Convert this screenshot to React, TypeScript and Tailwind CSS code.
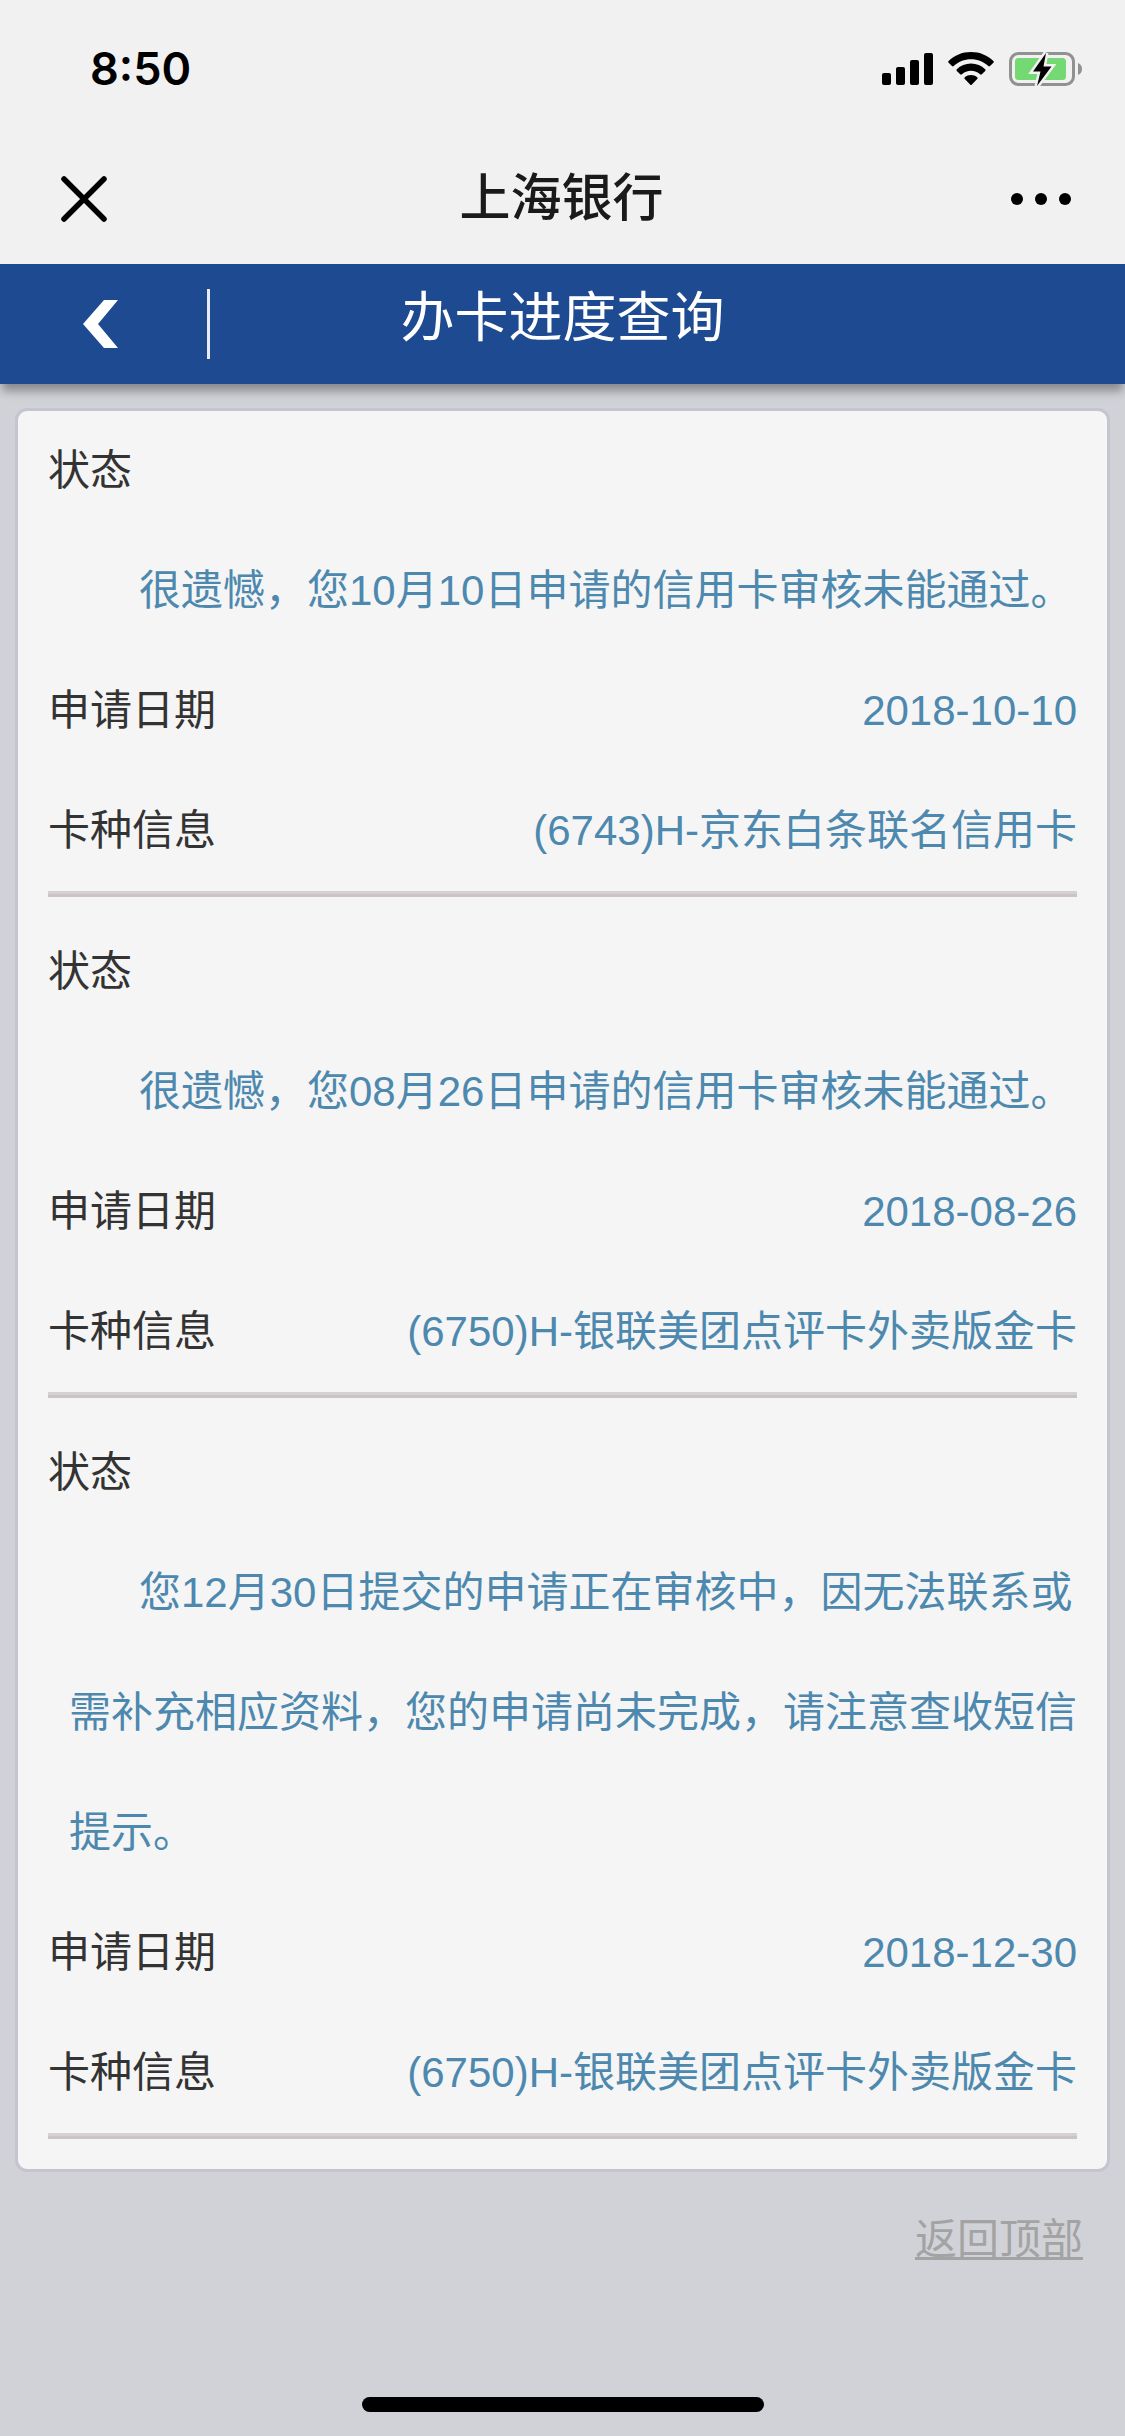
type ApplicationRecord = {
  message: string;
  date: string;
  card: string;
};

const records: ApplicationRecord[] = [
  {
    message: '很遗憾，您10月10日申请的信用卡审核未能通过。',
    date: '2018-10-10',
    card: '(6743)H-京东白条联名信用卡',
  },
  {
    message: '很遗憾，您08月26日申请的信用卡审核未能通过。',
    date: '2018-08-26',
    card: '(6750)H-银联美团点评卡外卖版金卡',
  },
  {
    message:
      '您12月30日提交的申请正在审核中，因无法联系或需补充相应资料，您的申请尚未完成，请注意查收短信提示。',
    date: '2018-12-30',
    card: '(6750)H-银联美团点评卡外卖版金卡',
  },
];

const SignalIcon = () => (
  <svg width="51" height="34" viewBox="0 0 51 34" aria-hidden="true">
    <rect x="0" y="21" width="9" height="12" rx="2" />
    <rect x="14" y="15" width="9" height="18" rx="2" />
    <rect x="28" y="8" width="9" height="25" rx="2" />
    <rect x="42" y="1" width="9" height="32" rx="2" />
  </svg>
);

const WifiIcon = () => (
  <svg width="46" height="34" viewBox="0 0 46 34" aria-hidden="true">
    <path d="M23 0C14.200 0 6.300 3.400 0.600 9a1.200 1.200 0 0 0 0 1.700L4 14.100a1.200 1.200 0 0 0 1.700 0C10.200 9.800 16.300 7.200 23 7.200s12.800 2.600 17.300 6.900a1.200 1.200 0 0 0 1.700 0l3.400-3.400a1.200 1.200 0 0 0 0-1.700C39.700 3.400 31.800 0 23 0z" />
    <path d="M23 11.500c-5.500 0-10.500 2.200-14.200 5.700a1.200 1.200 0 0 0 0 1.700l3.400 3.400a1.200 1.200 0 0 0 1.700 0c2.400-2.200 5.600-3.600 9.100-3.600s6.700 1.400 9.100 3.600a1.200 1.200 0 0 0 1.700 0l3.400-3.400a1.200 1.200 0 0 0 0-1.700C33.500 13.700 28.500 11.500 23 11.500z" />
    <path d="M23 23c-2.400 0-4.500 0.800-6.200 2.200a1.200 1.200 0 0 0 0 1.800l5.300 5.500a1.200 1.200 0 0 0 1.800 0l5.300-5.500a1.200 1.200 0 0 0 0-1.800C27.500 23.800 25.400 23 23 23z" />
  </svg>
);

const BatteryIcon = () => (
  <svg width="74" height="38" viewBox="0 -2 74 38" aria-hidden="true">
    <rect x="1.500" y="1.500" width="63" height="31" rx="8" fill="none" stroke="#919191" strokeWidth="3" />
    <path d="M69 11c2.600 1 4 3.300 4 6s-1.400 5-4 6z" fill="#919191" />
    <rect x="6" y="6" width="51" height="22" rx="3.500" fill="#75d973" />
    {/* Bolt with a halo that cuts through the shell */}
    <path
      d="M37 1L24 19.500h7.500L28 34l14.500-19.500h-8z"
      stroke="#f1f1f1"
      strokeWidth="5"
      fill="#f1f1f1"
    />
    <path d="M37 1L24 19.500h7.500L28 34l14.500-19.500h-8z" fill="#000" />
  </svg>
);

const StatusBar = () => (
  <div className="flex h-[132px] items-center justify-between pr-[42px] pl-[90px] pt-[6px]">
    <span className="font-['Inter',sans-serif] text-[45px] leading-[48px] font-semibold">8:50</span>
    <div className="flex items-center gap-[15px]">
      <SignalIcon />
      <WifiIcon />
      <BatteryIcon />
    </div>
  </div>
);

const NavBar = () => (
  <div className="grid h-[132px] grid-cols-[1fr_auto_1fr] items-center pt-[2px] pr-[54px] pl-[52px]">
    <button type="button" aria-label="关闭" className="justify-self-start p-2">
      <svg width="48" height="48" viewBox="0 0 48 48" fill="none" stroke="#000" strokeWidth="5.500" strokeLinecap="round">
        <path d="M4 4l40 40M44 4L4 44" />
      </svg>
    </button>
    <h1 className="text-[51px] leading-[72px] font-medium text-[#1a1a1a]">上海银行</h1>
    <button type="button" aria-label="更多" className="justify-self-end">
      <svg width="60" height="46" viewBox="0 0 60 46">
        <circle cx="6" cy="23" r="6" />
        <circle cx="30" cy="23" r="6" />
        <circle cx="54" cy="23" r="6" />
      </svg>
    </button>
  </div>
);

const PageHeader = () => (
  <div className="relative grid h-[120px] grid-cols-[1fr_auto_1fr] items-center bg-[#1e4a91] text-white shadow-[0_9px_9px_-2px_rgba(0,0,0,0.35)]">
    <div className="flex items-center">
      <button type="button" aria-label="返回" className="flex w-[207px] pl-[83px]">
        <svg width="36" height="50" viewBox="0 0 36 50" fill="#fff">
          <path d="M0 25L21 1h14L15 25l20 24H21z" />
        </svg>
      </button>
      <span className="h-[70px] w-[3px] bg-[#e9ebf2]" />
    </div>
    <h2 className="pb-[12px] text-[54px] leading-[78px]">办卡进度查询</h2>
  </div>
);

const Row = ({ label, value }: { label: string; value: string }) => (
  <div className="flex justify-between">
    <dt>{label}</dt>
    <dd className="text-[#4d88ae]">{value}</dd>
  </div>
);

const Record = ({ message, date, card }: ApplicationRecord) => (
  <dl className="mb-[15px] border-b-[3px] border-[#cdc3c4]">
    <div>
      <dt>状态</dt>
      <dd className="pl-[21px] indent-[70px] text-[#4d88ae]">{message}</dd>
    </div>
    <Row label="申请日期" value={date} />
    <Row label="卡种信息" value={card} />
    <div className="h-[3px] bg-[#d2d2d3]" />
  </dl>
);

const App = () => {
  return (
    <div className="flex min-h-screen flex-col bg-[#d1d2d8] font-['Liberation_Sans','Noto_Sans_CJK_SC',sans-serif]">
      <header className="bg-[#f1f1f1]">
        <StatusBar />
        <NavBar />
        <PageHeader />
      </header>

      <main className="px-[15px] pt-[24px]">
        <section className="rounded-[12px] border-[3px] border-[#c5c4cf] bg-[#f5f5f5] px-[30px] pb-[15px] text-[42px] leading-[120px] text-[#333]">
          {records.map((record) => (
            <Record key={record.date} {...record} />
          ))}
        </section>
        <div className="flex justify-end pt-[38px] pr-[27px]">
          <a
            href="#"
            className="text-[42px] leading-[60px] text-[#a3a3a3] underline decoration-[3px] underline-offset-[3px] [text-decoration-skip-ink:none]"
          >
            返回顶部
          </a>
        </div>
      </main>

      {/* Home indicator */}
      <div className="mx-auto mt-auto mb-[24px] h-[15px] w-[402px] rounded-full bg-black" />
    </div>
  );
};

export default App;
